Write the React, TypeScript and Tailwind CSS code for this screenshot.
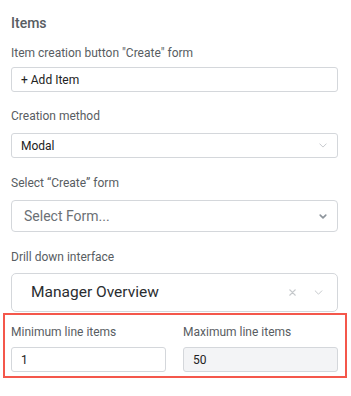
const font = { fontFamily: 'Roboto, "Noto Sans", sans-serif' };

function Chevron({ className }: { className?: string }) {
  return (
    <svg viewBox="0 0 10 6" className={className} fill="none" stroke="currentColor" strokeWidth="1.2" strokeLinecap="round" strokeLinejoin="round">
      <path d="M1 1l4 4 4-4" />
    </svg>
  );
}

function Label({ children, className = '' }: { children: React.ReactNode; className?: string }) {
  return <div className={`text-[12px] leading-[16px] text-[#585d62] ${className}`}>{children}</div>;
}

export default function App() {
  return (
    <div className="w-[351px] h-[396px] bg-white antialiased" style={font}>
      <div className="flex flex-col pl-[11px] pr-[13px] pt-[13px]">
        <h2 className="text-[14px] leading-[20px] font-medium text-[#585d62]">Items</h2>

        <Label className="mt-[12px]">Item creation button "Create" form</Label>
        <div className="mt-[6px] h-[25px] flex items-center px-[9px] border border-[#d4d7db] rounded-[3px] text-[12px] text-[#222]">
          + Add Item
        </div>

        <Label className="mt-[16px]">Creation method</Label>
        <div className="mt-[9px] h-[25px] flex items-center justify-between pl-[9px] pr-[10px] border border-[#d4d7db] rounded-[3px] text-[12px] text-[#222]">
          <span>Modal</span>
          <Chevron className="w-[8px] h-[5px] text-[#c4c8cc]" />
        </div>

        <Label className="mt-[17px]">Select “Create” form</Label>
        <div className="mt-[9px] h-[32px] flex items-center justify-between pl-[12px] pr-[10px] border border-[#d4d7db] rounded-[4px] text-[14px] text-[#6b7075]">
          <span>Select Form...</span>
          <svg viewBox="0 0 10 6" className="w-[8px] h-[5px] text-[#8e959c]" fill="none" stroke="currentColor" strokeWidth="2" strokeLinecap="round" strokeLinejoin="round">
            <path d="M1.5 1.2l3.5 3.5 3.5-3.5" />
          </svg>
        </div>

        <Label className="mt-[17px]">Drill down interface</Label>
        <div className="mt-[8px] h-[39px] flex items-center pl-[19px] pr-[14px] border border-[#d4d7db] rounded-[5px] text-[15.5px] text-[#2a2d30]">
          <span className="flex-1">Manager Overview</span>
          <svg viewBox="0 0 8 8" className="w-[7px] h-[7px] text-[#c6c9cc] mr-[18px]" fill="none" stroke="currentColor" strokeWidth="1.6" strokeLinecap="round">
            <path d="M1 1l6 6M7 1L1 7" />
          </svg>
          <Chevron className="w-[9px] h-[5px] text-[#c6c9cc]" />
        </div>

        <div className="-ml-[8px] -mr-[9px] mt-[1px] border-2 border-[#f4574b] pl-[6px] pr-[7px] pt-[9px] pb-[4px] grid grid-cols-2 gap-x-[17px]">
          <div className="flex flex-col">
            <Label>Minimum line items</Label>
            <div className="mt-[7px] h-[25px] flex items-center px-[9px] border border-[#d4d7db] rounded-[3px] text-[12px] text-[#222]">1</div>
          </div>
          <div className="flex flex-col">
            <Label>Maximum line items</Label>
            <div className="mt-[7px] h-[25px] flex items-center px-[9px] border border-[#d4d7db] rounded-[3px] bg-[#f3f4f6] text-[12px] text-[#222]">50</div>
          </div>
        </div>
      </div>
    </div>
  );
}
